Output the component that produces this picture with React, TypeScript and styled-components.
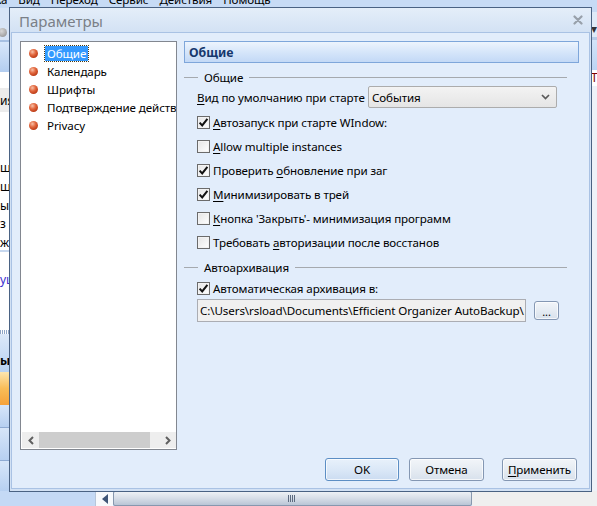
import React from 'react';
import styled, { createGlobalStyle } from 'styled-components';

const GlobalStyle = createGlobalStyle`
  html, body { margin: 0; padding: 0; }
  body {
    width: 597px; height: 506px; overflow: hidden;
    font-family: "Noto Sans", "Open Sans", sans-serif;
    font-size: 11.6px; letter-spacing: -0.1px; color: #000;
  }
  #root { width: 597px; height: 506px; }
  * { box-sizing: border-box; }
`;

const Screen = styled.div`
  position: relative;
  width: 597px;
  height: 506px;
  overflow: hidden;
  background: #c7dbf5;
  display: flex;
  flex-direction: column;
`;

/* ---------- background application ---------- */
const MenuBar = styled.div`
  height: 8px;
  overflow: hidden;
  flex: none;
  background: #c7dbf5;
`;
const MenuLine = styled.div`
  display: flex;
  gap: 11px;
  height: 16px;
  line-height: 16px;
  margin-top: -8px;
  font-size: 11.6px;
  white-space: nowrap;
`;
const MenuItem = styled.span<{ $shift?: number }>`
  margin-left: ${(p) => p.$shift ?? 0}px;
`;
const MainArea = styled.div`
  flex: 1;
  display: flex;
  min-height: 0;
`;
const Strip = styled.div<{ $w: number }>`
  width: ${(p) => p.$w}px;
  flex: none;
  display: flex;
  flex-direction: column;
  overflow: hidden;
`;
const Block = styled.div<{ $h?: number; $bg: string; $pt?: number; $lh?: number; $color?: string; $bold?: boolean }>`
  height: ${(p) => (p.$h ? `${p.$h}px` : 'auto')};
  flex: ${(p) => (p.$h ? 'none' : '1')};
  background: ${(p) => p.$bg};
  padding-top: ${(p) => p.$pt ?? 0}px;
  line-height: ${(p) => p.$lh ?? 16}px;
  color: ${(p) => p.$color ?? '#000'};
  font-weight: ${(p) => (p.$bold ? 700 : 400)};
  font-size: 12px;
  white-space: nowrap;
  overflow: hidden;
`;
const StripIcon = styled.div`
  width: 9px;
  height: 9px;
  margin-top: 20px;
  margin-left: -2px;
  border-radius: 50%;
  background: radial-gradient(circle at 40% 35%, #d8d8d8, #8a8a8a);
`;
const Middle = styled.div`
  flex: 1;
  background: #ffffff;
`;
const BottomBar = styled.div`
  height: 15px;
  flex: none;
  display: flex;
`;
const BottomLeft = styled.div`
  width: 95px;
  background: #c4d9f5;
`;
const BottomArrowCell = styled.div`
  width: 18px;
  background: #f7f9fc;
  border-left: 1px solid #b7c6da;
  display: flex;
  align-items: center;
  justify-content: center;
`;
const HScrollThumb = styled.div`
  width: 359px;
  border: 1px solid #8797ae;
  border-radius: 2px;
  background: linear-gradient(#eef1f5, #d6dde7 50%, #b9c5d6);
  display: flex;
  align-items: center;
  justify-content: center;
`;
const BottomRest = styled.div`
  flex: 1;
  background: #efefef;
`;

/* ---------- dialog ---------- */
const Dialog = styled.div`
  position: absolute;
  left: 9px;
  top: 7px;
  width: 583px;
  height: 485px;
  border: 1px solid #4a6283;
  background: #d2e1f4;
  display: flex;
  flex-direction: column;
  padding: 0 1px 2px 1px;
`;
const TitleBar = styled.div`
  height: 24px;
  flex: none;
  display: flex;
  align-items: center;
  justify-content: space-between;
  padding: 0 8px 0 9px;
  margin: 0 -1px;
  background: linear-gradient(#e4eef9, #d3e2f4);
`;
const TitleText = styled.span`
  font-size: 15px;
  letter-spacing: 0;
  color: #7a7f87;
  padding-top: 1px;
`;
const Body = styled.div`
  flex: 1;
  border: 1px solid #a9c2e4;
  background: #e2edfb;
  display: flex;
  flex-direction: column;
  padding: 8px 10px 7px 8px;
  min-height: 0;
`;
const ContentRow = styled.div`
  height: 409px;
  flex: none;
  display: flex;
  gap: 7px;
`;

/* list */
const ListBox = styled.div`
  width: 157px;
  flex: none;
  border: 1px solid #828790;
  background: #fff;
  display: flex;
  flex-direction: column;
  padding: 1px 0 1px 1px;
`;
const ListItems = styled.div`
  flex: 1;
  padding-top: 1px;
  overflow: hidden;
`;
const ListItem = styled.div`
  height: 18px;
  display: flex;
  align-items: center;
  padding-left: 7px;
  gap: 7px;
  white-space: nowrap;
  font-size: 11.6px;
`;
const Bullet = styled.span`
  width: 9px;
  height: 9px;
  flex: none;
  border-radius: 50%;
  background: radial-gradient(circle at 38% 32%, #f8c1a8 0%, #e2683f 38%, #bf3e19 72%, #8f2b10 100%);
`;
const ItemText = styled.span<{ $selected?: boolean }>`
  padding: 0 2px;
  line-height: 15px;
  background: ${(p) => (p.$selected ? '#3399ff' : 'transparent')};
  color: ${(p) => (p.$selected ? '#fff' : '#000')};
  outline: ${(p) => (p.$selected ? '1px dotted #4a3a10' : 'none')};
`;
const ListScroll = styled.div`
  height: 16px;
  flex: none;
  display: flex;
  background: #eeeeee;
`;
const ScrollArrow = styled.div`
  width: 17px;
  flex: none;
  display: flex;
  align-items: center;
  justify-content: center;
`;
const ScrollThumb = styled.div`
  width: 111px;
  background: #cdcdcd;
`;
const ScrollTrack = styled.div`
  flex: 1;
`;

/* right panel */
const Panel = styled.div`
  flex: 1;
  display: flex;
  flex-direction: column;
`;
const PanelHeader = styled.div`
  height: 22px;
  flex: none;
  border: 1px solid #7ea6da;
  background: linear-gradient(#edf4fd, #d6e6fa 50%, #c3d9f6);
  display: flex;
  align-items: center;
  padding-left: 4px;
  font-weight: 700;
  font-size: 12.3px;
  color: #16386d;
  letter-spacing: 0;
`;
const GroupHead = styled.div<{ $mt: number }>`
  height: 16px;
  margin-top: ${(p) => p.$mt}px;
  margin-right: 12px;
  display: flex;
  align-items: center;
  flex: none;
`;
const GroupLine = styled.div<{ $w?: number }>`
  height: 1px;
  background: #a5a9ae;
  width: ${(p) => (p.$w ? `${p.$w}px` : 'auto')};
  flex: ${(p) => (p.$w ? 'none' : '1')};
`;
const GroupLabel = styled.span`
  padding: 0 6px;
`;
const GroupBody = styled.div`
  padding-left: 13px;
  display: flex;
  flex-direction: column;
`;
const SelectRow = styled.div`
  height: 22px;
  margin-top: 1px;
  display: flex;
  align-items: center;
`;
const FieldLabel = styled.span`
  width: 171px;
  flex: none;
  white-space: nowrap;
`;
const Select = styled.div`
  width: 189px;
  height: 22px;
  border: 1px solid #acacac;
  border-radius: 2px;
  background: linear-gradient(#f3f3f3, #e5e5e5);
  display: flex;
  align-items: center;
  justify-content: space-between;
  padding: 0 6px 0 3px;
`;
const CheckRow = styled.div<{ $h?: number; $mt?: number }>`
  height: ${(p) => p.$h ?? 24}px;
  margin-top: ${(p) => p.$mt ?? 0}px;
  display: flex;
  align-items: center;
  gap: 3px;
  white-space: nowrap;
`;
const Box = styled.span`
  width: 13px;
  height: 13px;
  flex: none;
  border: 1px solid #6b6b6b;
  background: linear-gradient(135deg, #e4e4e4, #ffffff);
  box-shadow: inset 0 0 0 1px #f2f2f2;
  display: flex;
  align-items: center;
  justify-content: center;
`;
const U = styled.span`
  text-decoration: underline;
  text-underline-offset: 2px;
`;
const PathRow = styled.div`
  height: 23px;
  display: flex;
  align-items: center;
  gap: 8px;
`;
const PathField = styled.div`
  width: 329px;
  height: 23px;
  border: 1px solid #abadb3;
  background: #f0f0f0;
  padding-left: 2px;
  display: flex;
  align-items: center;
  white-space: nowrap;
  overflow: hidden;
`;
const Button = styled.button<{ $default?: boolean; $w: number; $mr: number }>`
  width: ${(p) => p.$w}px;
  height: 23px;
  margin-right: ${(p) => p.$mr}px;
  padding: 0;
  border: 1px solid ${(p) => (p.$default ? '#5c8ec4' : '#8497b3')};
  border-radius: 3px;
  background: ${(p) =>
    p.$default
      ? 'linear-gradient(#e8f1fb, #dbe8f7 50%, #cbdcf1)'
      : 'linear-gradient(#f2f5f9, #e6ecf3 50%, #d8e1ec)'};
  box-shadow: inset 0 0 0 1px rgba(255,255,255,0.7);
  font-family: "Noto Sans", "Open Sans", sans-serif;
  font-size: 11.6px;
  letter-spacing: -0.1px;
  color: #000;
  display: flex;
  align-items: center;
  justify-content: center;
`;
const BrowseButton = styled(Button)`
  height: 19px;
  align-items: flex-end;
  padding-bottom: 2px;
  font-size: 11px;
  line-height: 11px;
`;
const ButtonRow = styled.div`
  height: 23px;
  margin-top: 8px;
  display: flex;
  justify-content: flex-end;
  flex: none;
`;

const Check = () => (
  <svg width="11" height="11" viewBox="0 0 11 11">
    <path d="M1.6 5.6 L4.2 8.4 L9.4 1.8" fill="none" stroke="#111" strokeWidth="2" />
  </svg>
);

const CheckBox: React.FC<{ checked?: boolean }> = ({ checked }) => <Box>{checked && <Check />}</Box>;

const Chevron = () => (
  <svg width="9" height="6" viewBox="0 0 9 6">
    <path d="M1 1 L4.5 4.5 L8 1" fill="none" stroke="#5a5a5a" strokeWidth="1.7" />
  </svg>
);

const CloseX = () => (
  <svg width="10" height="10" viewBox="0 0 10 10">
    <path d="M1.5 1.5 L8.5 8.5 M8.5 1.5 L1.5 8.5" stroke="#98a0aa" strokeWidth="2.2" strokeLinecap="round" />
  </svg>
);

const ArrowL = () => (
  <svg width="6" height="9" viewBox="0 0 6 9">
    <path d="M5 1 L1.5 4.5 L5 8" fill="none" stroke="#606060" strokeWidth="2" />
  </svg>
);
const ArrowR = () => (
  <svg width="6" height="9" viewBox="0 0 6 9">
    <path d="M1 1 L4.5 4.5 L1 8" fill="none" stroke="#606060" strokeWidth="2" />
  </svg>
);
const TriLeft = () => (
  <svg width="6" height="10" viewBox="0 0 6 10">
    <path d="M6 0 L0 5 L6 10 Z" fill="#3f5577" />
  </svg>
);
const Grip = () => (
  <svg width="9" height="7" viewBox="0 0 9 7">
    <path d="M0.5 0 V7 M2.5 0 V7 M4.5 0 V7 M6.5 0 V7" stroke="#5d6b80" strokeWidth="1" />
  </svg>
);

const listItems = ['Общие', 'Календарь', 'Шрифты', 'Подтверждение действий', 'Privacy'];

export default function App() {
  return (
    <>
      <GlobalStyle />
      <Screen>
        <MenuBar>
          <MenuLine>
            <MenuItem $shift={-33}>Правка</MenuItem>
            <MenuItem>Вид</MenuItem>
            <MenuItem>Переход</MenuItem>
            <MenuItem>Сервис</MenuItem>
            <MenuItem>Действия</MenuItem>
            <MenuItem>Помощь</MenuItem>
          </MenuLine>
        </MenuBar>
        <MainArea>
          <Strip $w={9}>
            <Block $h={32} $bg="#d7e5f7"><StripIcon /></Block>
            <Block $h={2} $bg="#a7c0e2" />
            <Block $h={30} $bg="linear-gradient(#d8e7fa, #b3cdf0)" />
            <Block $h={16} $bg="#ffffff" />
            <Block $h={24} $bg="#ececec" $pt={6} $lh={14}>ия</Block>
            <Block $h={138} $bg="#ffffff" $pt={47} $lh={18.75}>
              ш<br />ш<br />ы<br />з<br />ж
            </Block>
            <Block $h={2} $bg="#c7d8ef" />
            <Block $h={78} $bg="#ffffff" $pt={19} $lh={18} $color="#3a2fd0">уц</Block>
            <Block $h={4} $bg="repeating-linear-gradient(90deg, #8fa6c6 0 1px, #ffffff 1px 2px)" />
            <Block $h={38} $bg="linear-gradient(#dce9f9, #b9d2f2)" $pt={19} $lh={16} $bold>ы</Block>
            <Block $h={33} $bg="linear-gradient(#fde6b0, #f9bd58 50%, #f6a23a)" />
            <Block $h={22} $bg="linear-gradient(#d7e6f9, #b7d0f1)" />
            <Block $h={1} $bg="#8fabd3" />
            <Block $h={32} $bg="linear-gradient(#d7e6f9, #b7d0f1)" />
            <Block $h={1} $bg="#8fabd3" />
            <Block $bg="linear-gradient(#d7e6f9, #b7d0f1)" />
          </Strip>
          <Middle />
          <Strip $w={6}>
            <Block $h={4} $bg="#c7dbf5" />
            <Block $h={25} $bg="#dfeaf7" $pt={12} $lh={10} $color="#333">▾</Block>
            <Block $h={3} $bg="#b5cbe8" />
            <Block $h={30} $bg="linear-gradient(#d3e4f8, #bcd4f3)" />
            <Block $h={16} $bg="#ffffff" $lh={16} $color="#7f0000">Т</Block>
            <Block $bg="#eef2f8" />
          </Strip>
        </MainArea>
        <BottomBar>
          <BottomLeft />
          <BottomArrowCell><TriLeft /></BottomArrowCell>
          <HScrollThumb><Grip /></HScrollThumb>
          <BottomRest />
        </BottomBar>

        <Dialog>
          <TitleBar>
            <TitleText>Параметры</TitleText>
            <CloseX />
          </TitleBar>
          <Body>
            <ContentRow>
              <ListBox>
                <ListItems>
                  {listItems.map((t, i) => (
                    <ListItem key={t}>
                      <Bullet />
                      <ItemText $selected={i === 0}>{t}</ItemText>
                    </ListItem>
                  ))}
                </ListItems>
                <ListScroll>
                  <ScrollArrow><ArrowL /></ScrollArrow>
                  <ScrollThumb />
                  <ScrollTrack />
                  <ScrollArrow><ArrowR /></ScrollArrow>
                </ListScroll>
              </ListBox>
              <Panel>
                <PanelHeader>Общие</PanelHeader>
                <GroupHead $mt={6}>
                  <GroupLine $w={14} />
                  <GroupLabel>Общие</GroupLabel>
                  <GroupLine />
                </GroupHead>
                <GroupBody>
                  <SelectRow>
                    <FieldLabel><U>В</U>ид по умолчанию при старте</FieldLabel>
                    <Select>
                      <span>События</span>
                      <Chevron />
                    </Select>
                  </SelectRow>
                  <CheckRow $mt={2}>
                    <CheckBox checked />
                    <span><U>А</U>втозапуск при старте WIndow:</span>
                  </CheckRow>
                  <CheckRow>
                    <CheckBox />
                    <span><U>A</U>llow multiple instances</span>
                  </CheckRow>
                  <CheckRow>
                    <CheckBox checked />
                    <span>Проверить <U>о</U>бновление при заг</span>
                  </CheckRow>
                  <CheckRow>
                    <CheckBox checked />
                    <span><U>М</U>инимизировать в трей</span>
                  </CheckRow>
                  <CheckRow>
                    <CheckBox />
                    <span><U>К</U>нопка 'Закрыть'- минимизация программ</span>
                  </CheckRow>
                  <CheckRow>
                    <CheckBox />
                    <span>Требовать <U>а</U>вторизации после восстанов</span>
                  </CheckRow>
                </GroupBody>
                <GroupHead $mt={5}>
                  <GroupLine $w={14} />
                  <GroupLabel>Автоархивация</GroupLabel>
                  <GroupLine />
                </GroupHead>
                <GroupBody>
                  <CheckRow $h={22} $mt={2}>
                    <CheckBox checked />
                    <span>Автоматическая архивация в:</span>
                  </CheckRow>
                  <PathRow>
                    <PathField>C:\Users\rsload\Documents\Efficient Organizer AutoBackup\</PathField>
                    <BrowseButton $w={25} $mr={0}>...</BrowseButton>
                  </PathRow>
                </GroupBody>
              </Panel>
            </ContentRow>
            <ButtonRow>
              <Button $default $w={74} $mr={10}>OK</Button>
              <Button $w={75} $mr={18}>Отмена</Button>
              <Button $w={75} $mr={2}><span><U>П</U>рименить</span></Button>
            </ButtonRow>
          </Body>
        </Dialog>
      </Screen>
    </>
  );
}
